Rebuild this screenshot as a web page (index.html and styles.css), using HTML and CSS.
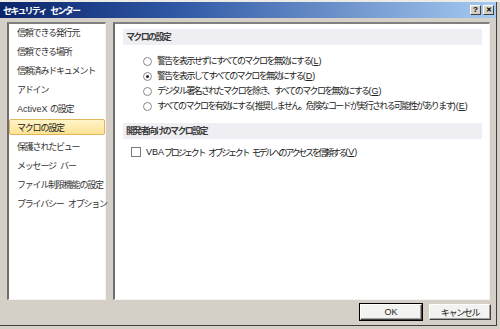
FILE: index.html
```html
<!DOCTYPE html>
<html>
  <head>
    <meta charset="utf-8">
    <title>セキュリティ センター</title>
    <link rel="stylesheet" href="styles.css">
  </head>
  <body>
    <div class="backdrop"></div>
    <div class="dialog">
      <div class="titlebar">
        <span class="title">セキュリティ センター</span>
        <span class="tbtn">?</span>
        <span class="tbtn close">✕</span>
      </div>

      <div class="main">
        <ul class="panel nav">
          <li>信頼できる発行元</li>
          <li>信頼できる場所</li>
          <li>信頼済みドキュメント</li>
          <li>アドイン</li>
          <li><span class="en">ActiveX </span>の設定</li>
          <li class="selected">マクロの設定</li>
          <li>保護されたビュー</li>
          <li>メッセージ バー</li>
          <li>ファイル制限機能の設定</li>
          <li>プライバシー オプション</li>
        </ul>

        <div class="panel content">
          <div class="section">マクロの設定</div>
          <div class="options">
            <div class="opt"><span class="radio"></span>警告を表示せずにすべてのマクロを無効にする<span class="en">(<u>L</u>)</span></div>
            <div class="opt"><span class="radio on"></span>警告を表示してすべてのマクロを無効にする<span class="en">(<u>D</u>)</span></div>
            <div class="opt"><span class="radio"></span>デジタル署名されたマクロを除き、すべてのマクロを無効にする<span class="en">(<u>G</u>)</span></div>
            <div class="opt"><span class="radio"></span>すべてのマクロを有効にする <span class="en">(</span>推奨しません。危険なコードが実行される可能性があります<span class="en">)(<u>E</u>)</span></div>
          </div>
          <div class="section second">開発者向けのマクロ設定</div>
          <div class="check-row"><span class="check"></span><span class="en">VBA </span>プロジェクト オブジェクト モデルへのアクセスを信頼する<span class="en">(<u>V</u>)</span></div>
        </div>
      </div>

      <div class="footer">
        <button class="btn default">OK</button>
        <button class="btn">キャンセル</button>
      </div>
    </div>
  </body>
</html>
```

FILE: styles.css
```css
body, ul, li, div { margin: 0; padding: 0; }

body {
  background-color: #d4d0c8;
  font-family: 'Liberation Sans', 'Noto Sans CJK JP', sans-serif;
  font-size: 9px;
  letter-spacing: -1.65px;
  word-spacing: 3px;
  color: #222;
  width: 500px;
  height: 329px;
  overflow: hidden;
}

.en {
  letter-spacing: 0;
  word-spacing: 0;
  font-size: 9px;
}

.backdrop {
  height: 2px;
  background-color: #ecebe6;
}

.dialog {
  width: 496px;
  height: 323px;
  background-color: #d4d0c8;
  border-right: 1px solid #404040;
  border-bottom: 1px solid #404040;
}

/* title bar */
.titlebar {
  height: 16px;
  display: flex;
  align-items: center;
  background: linear-gradient(to right, #0a246a 0%, #2f57a4 35%, #a6caf0 100%);
  padding-left: 3px;
  padding-right: 2px;
}

.title {
  flex: 1;
  color: #fff;
  font-weight: bold;
  font-size: 9px;
  letter-spacing: -1.8px;
  word-spacing: 4px;
}

.tbtn {
  width: 11px;
  height: 10px;
  margin-left: 2px;
  background-color: #d4d0c8;
  border-top: 1px solid #fff;
  border-left: 1px solid #fff;
  border-right: 1px solid #404040;
  border-bottom: 1px solid #404040;
  box-sizing: border-box;
  color: #000;
  font-family: 'Liberation Sans', sans-serif;
  font-weight: bold;
  font-size: 8px;
  letter-spacing: 0;
  line-height: 8px;
  text-align: center;
}

.tbtn.close {
  font-size: 7px;
}

/* panels */
.main {
  display: flex;
  gap: 7px;
  padding: 4px 0 0 7px;
  height: 278px;
}

.panel {
  background-color: #fff;
  border-top: 2px solid #808080;
  border-left: 2px solid #6e6e6e;
  border-right: 1px solid #f4f4f4;
  border-bottom: 1px solid #f4f4f4;
  box-sizing: border-box;
  height: 278px;
}

.nav {
  width: 99px;
  list-style: none;
}

.nav li {
  height: 14px;
  line-height: 16px;
  margin: 0 0 3px 0;
  padding-left: 7px;
  border: 1px solid transparent;
  border-radius: 2px;
  color: #333;
  letter-spacing: -1.2px;
  white-space: nowrap;
}

.nav li.selected {
  background: linear-gradient(#fff4c8, #fde394);
  border-color: #e2b45c;
  color: #222;
}

.content {
  width: 377px;
  padding: 5px 7px 0 8px;
}

.section {
  height: 16px;
  line-height: 16px;
  background-color: #efeff3;
  padding-left: 3px;
  font-weight: bold;
  color: #3a3a3a;
}

.section.second {
  margin-top: 9px;
}

.options {
  padding-top: 9px;
}

.opt {
  height: 15px;
  line-height: 15px;
  display: flex;
  align-items: center;
  padding-left: 20px;
  white-space: nowrap;
}

.radio {
  flex-shrink: 0;
  width: 7px;
  height: 7px;
  border: 1px solid #8a8a8a;
  border-radius: 50%;
  margin-right: 5px;
  display: flex;
  align-items: center;
  justify-content: center;
  background-color: #fff;
}

.radio.on::after {
  content: "";
  width: 3px;
  height: 3px;
  border-radius: 50%;
  background-color: #222;
}

.check-row {
  margin-top: 6px;
  height: 14px;
  display: flex;
  align-items: center;
  padding-left: 8px;
  white-space: nowrap;
  letter-spacing: -2.3px;
  word-spacing: 3.5px;
}

.check {
  flex-shrink: 0;
  width: 8px;
  height: 8px;
  border: 1px solid #7a7a7a;
  margin-right: 5px;
  background-color: #fff;
}

/* buttons */
.footer {
  display: flex;
  justify-content: flex-end;
  gap: 7px;
  padding: 4px 5px 0 0;
}

.btn {
  width: 62px;
  height: 16px;
  padding: 0;
  font-family: 'Liberation Sans', 'Noto Sans CJK JP', sans-serif;
  font-size: 9px;
  letter-spacing: -1.3px;
  color: #222;
  background-color: #f2f2f0;
  border-top: 1px solid #fff;
  border-left: 1px solid #fff;
  border-right: 1px solid #404040;
  border-bottom: 1px solid #404040;
  box-shadow: inset -1px -1px 0 #a0a0a0;
}

.btn.default {
  letter-spacing: 0;
  outline: 1px solid #000;
  outline-offset: 0;
}
```
